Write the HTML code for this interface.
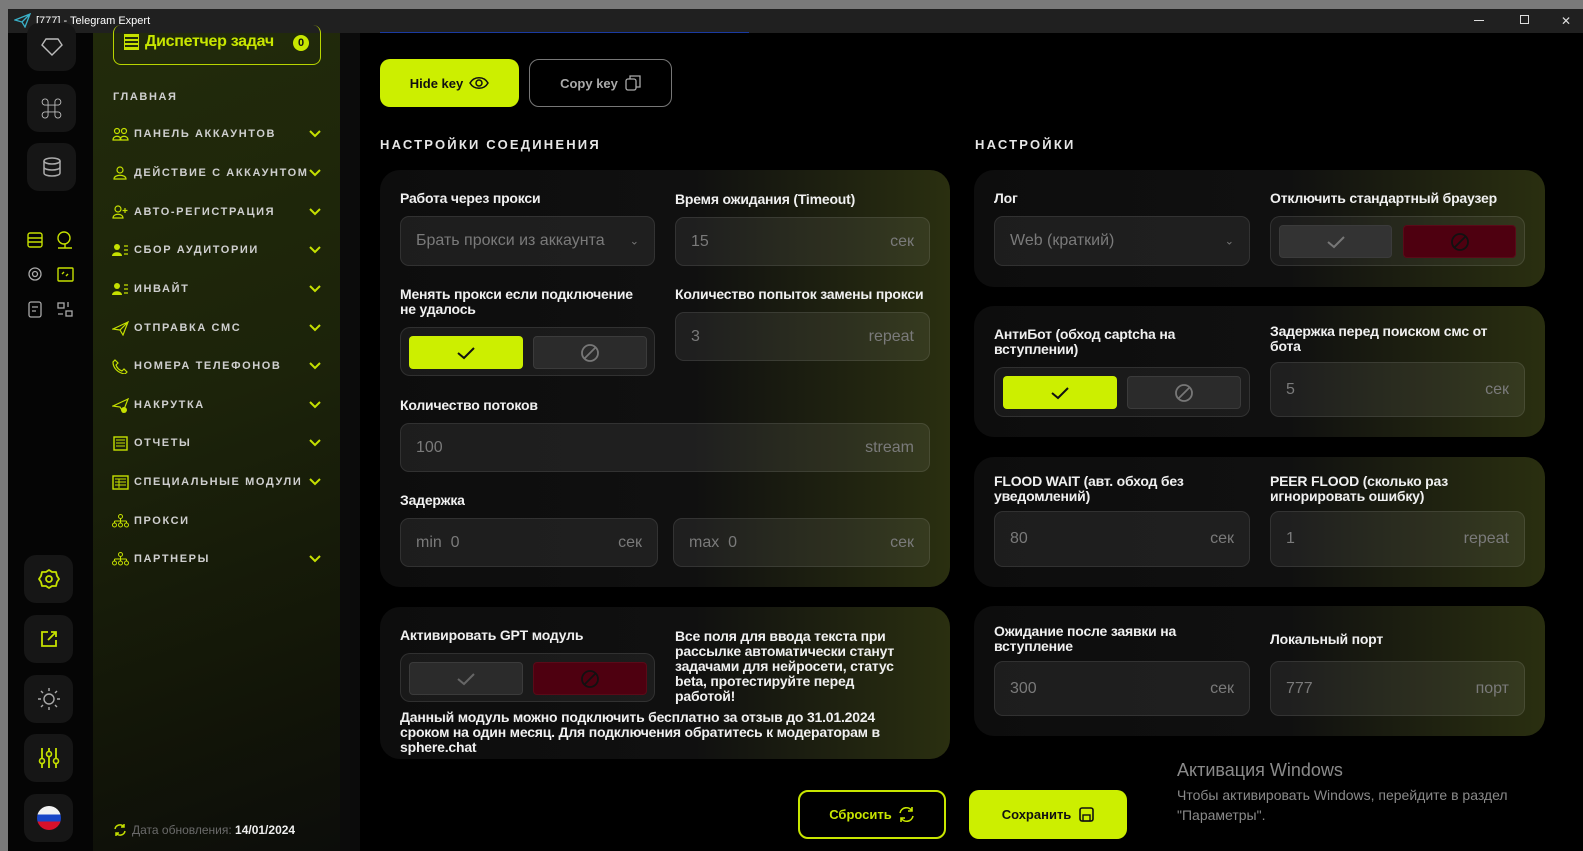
<!DOCTYPE html>
<html><head><meta charset="utf-8"><style>
*{margin:0;padding:0;box-sizing:border-box}
body{width:1583px;height:851px;overflow:hidden;background:#000;font-family:"Liberation Sans","Noto Sans CJK SC",sans-serif;position:relative}
.a{position:absolute}
.card{position:absolute;border-radius:20px;background:linear-gradient(90deg,#0d0d0d 0%,#101010 55%,#2a2f10 100%)}
.lbl{position:absolute;color:#f0f0f0;font-size:14px;font-weight:bold;line-height:15px;letter-spacing:-0.2px}
.inp{position:absolute;border-radius:9px;background:rgba(255,255,255,0.065);border:1px solid rgba(255,255,255,0.09);color:#7a7a7a;font-size:16px}
.inp .v{position:absolute;left:15px;top:50%;transform:translateY(-50%)}
.inp .u{position:absolute;right:15px;top:50%;transform:translateY(-50%)}
.tg{position:absolute;border-radius:10px;background:rgba(255,255,255,0.05);border:1px solid rgba(255,255,255,0.1)}
.b{position:absolute;top:8px;height:33px;width:114px;border-radius:4px;display:flex;align-items:center;justify-content:center}
.yes{background:#ccef00}
.off{background:#2b2b2b;border:1px solid #3b3b3b}
.red{background:#4e0010;border:1px solid #5a0a18}
.hd{position:absolute;color:#e6e6e6;font-size:13px;font-weight:bold;letter-spacing:2.2px}
.mi{position:absolute;left:112px;height:16px;display:flex;align-items:center;color:#cfcfcf;font-size:11px;font-weight:bold;letter-spacing:1.6px}
.mi svg{margin-right:5px}
.rb{position:absolute;left:24px;width:49px;height:48px;border-radius:12px;background:#161616;display:flex;align-items:center;justify-content:center}
</style></head><body>
<div class="a" style="left:0;top:0;width:1583px;height:9px;background:#7a7a7a"></div>
<div class="a" style="left:0;top:0;width:8px;height:851px;background:#7a7a7a"></div>
<div class="a" style="left:8px;top:9px;width:1575px;height:24px;background:#202020"></div>
<svg class="a" style="left:14px;top:13px" width="17" height="15" viewBox="0 0 17 15"><path d="M1 7 L16 1 L11 14 L8 9 Z M8 9 L16 1" fill="none" stroke="#3ab0c8" stroke-width="1.3"/></svg>
<div class="a" style="left:36px;top:15px;color:#fff;font-size:11px">[777] - Telegram Expert</div>
<div class="a" style="left:1474px;top:20px;width:10px;height:1px;background:#ddd"></div>
<div class="a" style="left:1520px;top:15px;width:9px;height:9px;border:1px solid #ddd"></div>
<div class="a" style="left:1561px;top:14px;color:#ddd;font-size:12px">✕</div>

<div class="a" style="left:8px;top:33px;width:85px;height:818px;background:#050505"></div>
<div class="rb" style="left:27px;top:23px;height:48px"><svg width="24" height="20" viewBox="0 0 24 20"><path d="M6 2 H18 L22 8 L12 18 L2 8 Z" fill="none" stroke="#bbb" stroke-width="1.4"/></svg></div>
<div class="rb" style="left:27px;top:84px"><span style="color:#bbb;font-size:22px">⌘</span></div>
<div class="rb" style="left:27px;top:143px"><svg width="20" height="22" viewBox="0 0 20 22"><ellipse cx="10" cy="5" rx="8" ry="3" fill="none" stroke="#aaa" stroke-width="1.5"/><path d="M2 5 V17 C2 21 18 21 18 17 V5 M2 11 C2 15 18 15 18 11" fill="none" stroke="#aaa" stroke-width="1.5"/></svg></div>
<svg class="a" style="left:26px;top:230px" width="52" height="92" viewBox="0 0 52 92">
<g fill="none" stroke="#c5e000" stroke-width="1.4"><rect x="2" y="3" width="14" height="14" rx="2"/><path d="M2 8H16M2 12H16"/><circle cx="38" cy="8" r="6"/><path d="M32 18H46M39 14V18"/>
<rect x="32" y="38" width="15" height="13" rx="1"/><path d="M36 44l2-2M40 46l2-2"/></g>
<g fill="none" stroke="#aaa" stroke-width="1.3"><circle cx="9" cy="44" r="6"/><circle cx="9" cy="44" r="2.5"/><rect x="3" y="72" width="12" height="15" rx="2"/><path d="M6 77H12M6 81H10"/><rect x="32" y="73" width="6" height="5"/><rect x="40" y="81" width="6" height="5"/><path d="M42 72 V77 M32 84H37"/></g></svg>
<div class="rb" style="left:24px;top:555px"><svg width="22" height="22" viewBox="0 0 22 22"><path d="M11 2 L14 4 L18 4 L19 8 L21 11 L19 14 L18 18 L14 18 L11 20 L8 18 L4 18 L3 14 L1 11 L3 8 L4 4 L8 4 Z" fill="none" stroke="#c5e000" stroke-width="1.8" stroke-linejoin="round"/><circle cx="11" cy="11" r="3" fill="none" stroke="#c5e000" stroke-width="1.8"/></svg></div>
<div class="rb" style="left:24px;top:615px"><svg width="20" height="20" viewBox="0 0 20 20"><path d="M9 3H3V17H17V11 M12 3H17V8 M17 3L9 11" fill="none" stroke="#c5e000" stroke-width="1.8"/></svg></div>
<div class="rb" style="left:24px;top:675px"><svg width="24" height="24" viewBox="0 0 24 24"><circle cx="12" cy="12" r="5" fill="none" stroke="#aaa" stroke-width="1.4"/><path d="M12 1V4M12 20V23M1 12H4M20 12H23M4 4L6 6M18 18L20 20M4 20L6 18M18 6L20 4" stroke="#aaa" stroke-width="1.4"/></svg></div>
<div class="rb" style="left:24px;top:734px"><svg width="22" height="24" viewBox="0 0 22 24"><path d="M4 2V22M11 2V22M18 2V22" stroke="#c5e000" stroke-width="1.8"/><circle cx="4" cy="15" r="2.5" fill="#161616" stroke="#c5e000" stroke-width="1.6"/><circle cx="11" cy="8" r="2.5" fill="#161616" stroke="#c5e000" stroke-width="1.6"/><circle cx="18" cy="15" r="2.5" fill="#161616" stroke="#c5e000" stroke-width="1.6"/></svg></div>
<div class="rb" style="left:24px;top:794px"><div style="width:24px;height:24px;border-radius:50%;background:linear-gradient(#f2f2f2 0 35%,#1846c8 35% 65%,#d8102a 65%)"></div></div>

<div class="a" style="left:93px;top:33px;width:247px;height:818px;background:linear-gradient(160deg,#222b0b 0%,#1c230a 45%,#121508 80%,#0c0d0a 100%)"></div>
<div class="a" style="left:340px;top:33px;width:20px;height:818px;background:#0b0b0b"></div>
<div class="a" style="left:113px;top:25px;width:208px;height:40px;border:1.5px solid #b8d400;border-radius:8px;border-top:none"></div>
<div class="a" style="left:124px;top:34px;width:15px;height:16px;border:1.5px solid #c5e000;background:repeating-linear-gradient(#c5e000 0 2px,transparent 2px 4px)"></div>
<div class="a" style="left:145px;top:33px;color:#c8e600;font-size:16px;font-weight:bold;letter-spacing:-0.3px">Диспетчер задач</div>
<div class="a" style="left:293px;top:35px;width:16px;height:16px;border-radius:50%;background:#c8e600;color:#111;font-size:11px;font-weight:bold;text-align:center;line-height:16px">0</div>
<div class="a" style="left:113px;top:91px;color:#cfcfcf;font-size:11px;font-weight:bold;letter-spacing:1.6px">ГЛАВНАЯ</div>

<div class="mi" style="top:126px"><svg width="17" height="14"><g fill="none" stroke="#c5e000" stroke-width="1.2"><circle cx="5" cy="4" r="2.5"/><circle cx="12" cy="4" r="2.5"/><path d="M1 13C1 8 9 8 9 13ZM8 13C8 8 16 8 16 13Z"/></g></svg>ПАНЕЛЬ АККАУНТОВ</div>
<div class="mi" style="top:165px"><svg width="17" height="14"><g fill="none" stroke="#c5e000" stroke-width="1.2"><circle cx="8" cy="4" r="3"/><path d="M2 13C2 8 14 8 14 13Z"/></g></svg>ДЕЙСТВИЕ С АККАУНТОМ</div>
<div class="mi" style="top:204px"><svg width="17" height="14"><g fill="none" stroke="#c5e000" stroke-width="1.2"><circle cx="6" cy="4" r="3"/><path d="M1 13C1 8 11 8 11 13ZM13 3V8M10.5 5.5H15.5"/></g></svg>АВТО-РЕГИСТРАЦИЯ</div>
<div class="mi" style="top:242px"><svg width="17" height="14"><circle cx="5" cy="4" r="3" fill="#c5e000"/><path d="M0 13C0 8 10 8 10 13Z" fill="#c5e000"/><path d="M12 3H16M12 7H16M12 11H16" stroke="#c5e000" stroke-width="1.2"/></svg>СБОР АУДИТОРИИ</div>
<div class="mi" style="top:281px"><svg width="17" height="14"><circle cx="5" cy="4" r="3" fill="#c5e000"/><path d="M0 13C0 8 10 8 10 13Z" fill="#c5e000"/><path d="M12 3H16M12 7H16M12 11H16" stroke="#c5e000" stroke-width="1.2"/></svg>ИНВАЙТ</div>
<div class="mi" style="top:320px"><svg width="17" height="15"><path d="M1 8L16 1L11 14L8 9Z M8 9L16 1" fill="none" stroke="#c5e000" stroke-width="1.2"/></svg>ОТПРАВКА СМС</div>
<div class="mi" style="top:358px"><svg width="17" height="15"><path d="M3 1L6 4L4 6C5 9 7 11 10 12L12 10L15 13L13 15C6 14 1 9 1 3Z" fill="none" stroke="#c5e000" stroke-width="1.2"/></svg>НОМЕРА ТЕЛЕФОНОВ</div>
<div class="mi" style="top:397px"><svg width="17" height="15"><path d="M1 8L16 1L11 14L8 9Z" fill="none" stroke="#c5e000" stroke-width="1.2"/><circle cx="12" cy="12" r="3" fill="#c5e000"/></svg>НАКРУТКА</div>
<div class="mi" style="top:435px"><svg width="17" height="15"><rect x="2" y="1" width="13" height="13" fill="none" stroke="#c5e000" stroke-width="1.4"/><path d="M4 4H13M4 7H13M4 10H13" stroke="#c5e000"/></svg>ОТЧЕТЫ</div>
<div class="mi" style="top:474px"><svg width="17" height="15"><rect x="1" y="1" width="15" height="13" fill="none" stroke="#c5e000" stroke-width="1.4"/><path d="M3 4H14M3 7H14M3 10H14M7 4V13" stroke="#c5e000"/></svg>СПЕЦИАЛЬНЫЕ МОДУЛИ</div>
<div class="mi" style="top:513px"><svg width="17" height="14"><g fill="none" stroke="#c5e000" stroke-width="1"><circle cx="8.5" cy="2.5" r="2"/><path d="M8.5 4.5V7M2.5 7H14.5M2.5 7V9M8.5 7V9M14.5 7V9"/><circle cx="2.5" cy="11" r="2"/><circle cx="8.5" cy="11" r="2"/><circle cx="14.5" cy="11" r="2"/></g></svg>ПРОКСИ</div>
<div class="mi" style="top:551px"><svg width="17" height="14"><g fill="none" stroke="#c5e000" stroke-width="1"><circle cx="8.5" cy="2.5" r="2"/><path d="M8.5 4.5V7M2.5 7H14.5M2.5 7V9M8.5 7V9M14.5 7V9"/><circle cx="2.5" cy="11" r="2"/><circle cx="8.5" cy="11" r="2"/><circle cx="14.5" cy="11" r="2"/></g></svg>ПАРТНЕРЫ</div>
<svg class="a" style="left:308px;top:128px" width="14" height="440"><g fill="none" stroke="#c5e000" stroke-width="2"><path d="M2 3L7 8L12 3"/><path d="M2 42L7 47L12 42"/><path d="M2 81L7 86L12 81"/><path d="M2 119L7 124L12 119"/><path d="M2 158L7 163L12 158"/><path d="M2 197L7 202L12 197"/><path d="M2 235L7 240L12 235"/><path d="M2 274L7 279L12 274"/><path d="M2 312L7 317L12 312"/><path d="M2 351L7 356L12 351"/><path d="M2 428L7 433L12 428"/></g></svg>
<svg class="a" style="left:113px;top:823px" width="14" height="14"><path d="M2 6A5 5 0 0 1 11 4M12 8A5 5 0 0 1 3 10M11 1V4H8M3 13V10H6" fill="none" stroke="#c5e000" stroke-width="1.5"/></svg>
<div class="a" style="left:132px;top:823px;font-size:12px;color:#6a6a6a">Дата обновления: <span style="color:#eee;font-weight:bold">14/01/2024</span></div>

<div class="a" style="left:380px;top:32px;width:369px;height:1px;background:#1a3aa0"></div>
<div class="a" style="left:380px;top:59px;width:139px;height:48px;border-radius:10px;background:#ccef00;color:#111;font-size:13px;font-weight:bold;display:flex;align-items:center;justify-content:center;gap:6px">Hide key <svg width="20" height="14"><path d="M1 7C5 0 15 0 19 7C15 14 5 14 1 7Z" fill="none" stroke="#111" stroke-width="1.5"/><circle cx="10" cy="7" r="3" fill="none" stroke="#111" stroke-width="1.5"/></svg></div>
<div class="a" style="left:529px;top:59px;width:143px;height:48px;border-radius:10px;border:1.5px solid #777;color:#aaa;font-size:13px;font-weight:bold;display:flex;align-items:center;justify-content:center;gap:7px">Copy key <svg width="16" height="16"><rect x="1" y="4" width="10" height="11" rx="2" fill="none" stroke="#aaa" stroke-width="1.3"/><path d="M5 4V1H15V12H11" fill="none" stroke="#aaa" stroke-width="1.3"/></svg></div>

<div class="hd" style="left:380px;top:137px">НАСТРОЙКИ СОЕДИНЕНИЯ</div>
<div class="hd" style="left:975px;top:137px">НАСТРОЙКИ</div>

<div class="card" style="left:380px;top:170px;width:570px;height:417px"></div>
<div class="lbl" style="left:400px;top:191px">Работа через прокси</div>
<div class="inp" style="left:400px;top:216px;width:255px;height:50px"><span class="v">Брать прокси из аккаунта</span><span class="u" style="font-size:11px">⌄</span></div>
<div class="lbl" style="left:675px;top:192px">Время ожидания (Timeout)</div>
<div class="inp" style="left:675px;top:217px;width:255px;height:49px"><span class="v">15</span><span class="u">сек</span></div>
<div class="lbl" style="left:400px;top:287px">Менять прокси если подключение<br>не удалось</div>
<div class="lbl" style="left:675px;top:287px">Количество попыток замены прокси</div>
<div class="tg" style="left:400px;top:327px;width:255px;height:49px"><div class="b yes" style="left:8px;top:8px;width:114px;height:33px"><svg width="20" height="14"><path d="M2 7L8 12L18 2" fill="none" stroke="#111" stroke-width="2"/></svg></div><div class="b off" style="left:132px;top:8px"><svg width="20" height="20"><circle cx="10" cy="10" r="8" fill="none" stroke="#777" stroke-width="1.8"/><path d="M4 16L16 4" stroke="#777" stroke-width="1.8"/></svg></div></div>
<div class="inp" style="left:675px;top:312px;width:255px;height:49px"><span class="v">3</span><span class="u">repeat</span></div>
<div class="lbl" style="left:400px;top:398px">Количество потоков</div>
<div class="inp" style="left:400px;top:423px;width:530px;height:49px"><span class="v">100</span><span class="u">stream</span></div>
<div class="lbl" style="left:400px;top:493px">Задержка</div>
<div class="inp" style="left:400px;top:518px;width:258px;height:49px"><span class="v">min &nbsp;0</span><span class="u">сек</span></div>
<div class="inp" style="left:673px;top:518px;width:257px;height:49px"><span class="v">max &nbsp;0</span><span class="u">сек</span></div>

<div class="card" style="left:380px;top:607px;width:570px;height:152px"></div>
<div class="lbl" style="left:400px;top:628px">Активировать GPT модуль</div>
<div class="tg" style="left:400px;top:653px;width:255px;height:49px"><div class="b off" style="left:8px"><svg width="20" height="14"><path d="M2 7L8 12L18 2" fill="none" stroke="#666" stroke-width="2"/></svg></div><div class="b red" style="left:132px"><svg width="20" height="20"><circle cx="10" cy="10" r="8" fill="none" stroke="#111" stroke-width="1.8"/><path d="M4 16L16 4" stroke="#111" stroke-width="1.8"/></svg></div></div>
<div class="lbl" style="left:675px;top:629px;width:232px">Все поля для ввода текста при рассылке автоматически станут задачами для нейросети, статус beta, протестируйте перед работой!</div>
<div class="lbl" style="left:400px;top:710px;width:505px">Данный модуль можно подключить бесплатно за отзыв до 31.01.2024 сроком на один месяц. Для подключения обратитесь к модераторам в sphere.chat</div>

<div class="card" style="left:974px;top:170px;width:571px;height:117px"></div>
<div class="lbl" style="left:994px;top:191px">Лог</div>
<div class="inp" style="left:994px;top:216px;width:256px;height:50px"><span class="v">Web (краткий)</span><span class="u" style="font-size:11px">⌄</span></div>
<div class="lbl" style="left:1270px;top:191px">Отключить стандартный браузер</div>
<div class="tg" style="left:1270px;top:216px;width:255px;height:50px"><div class="b off" style="left:8px;background:#333;width:113px"><svg width="20" height="14"><path d="M2 7L8 12L18 2" fill="none" stroke="#777" stroke-width="2"/></svg></div><div class="b red" style="left:132px;width:113px"><svg width="20" height="20"><circle cx="10" cy="10" r="8" fill="none" stroke="#111" stroke-width="1.8"/><path d="M4 16L16 4" stroke="#111" stroke-width="1.8"/></svg></div></div>

<div class="card" style="left:974px;top:306px;width:571px;height:131px"></div>
<div class="lbl" style="left:994px;top:327px">АнтиБот (обход captcha на<br>вступлении)</div>
<div class="tg" style="left:994px;top:367px;width:256px;height:50px"><div class="b yes" style="left:8px;width:114px"><svg width="20" height="14"><path d="M2 7L8 12L18 2" fill="none" stroke="#111" stroke-width="2"/></svg></div><div class="b off" style="left:132px"><svg width="20" height="20"><circle cx="10" cy="10" r="8" fill="none" stroke="#777" stroke-width="1.8"/><path d="M4 16L16 4" stroke="#777" stroke-width="1.8"/></svg></div></div>
<div class="lbl" style="left:1270px;top:324px">Задержка перед поиском смс от<br>бота</div>
<div class="inp" style="left:1270px;top:362px;width:255px;height:55px"><span class="v">5</span><span class="u">сек</span></div>

<div class="card" style="left:974px;top:457px;width:571px;height:130px"></div>
<div class="lbl" style="left:994px;top:474px">FLOOD WAIT (авт. обход без<br>уведомлений)</div>
<div class="inp" style="left:994px;top:511px;width:256px;height:56px"><span class="v">80</span><span class="u">сек</span></div>
<div class="lbl" style="left:1270px;top:474px">PEER FLOOD (сколько раз<br>игнорировать ошибку)</div>
<div class="inp" style="left:1270px;top:511px;width:255px;height:56px"><span class="v">1</span><span class="u">repeat</span></div>

<div class="card" style="left:974px;top:606px;width:571px;height:130px"></div>
<div class="lbl" style="left:994px;top:624px">Ожидание после заявки на<br>вступление</div>
<div class="inp" style="left:994px;top:661px;width:256px;height:55px"><span class="v">300</span><span class="u">сек</span></div>
<div class="lbl" style="left:1270px;top:632px">Локальный порт</div>
<div class="inp" style="left:1270px;top:661px;width:255px;height:55px"><span class="v">777</span><span class="u">порт</span></div>

<div class="a" style="left:798px;top:790px;width:148px;height:49px;border:2px solid #c8e600;border-radius:10px;color:#c8e600;font-size:13px;font-weight:bold;display:flex;align-items:center;justify-content:center;gap:6px">Сбросить <svg width="17" height="17"><path d="M2 7A6.5 6.5 0 0 1 14 5M15 10A6.5 6.5 0 0 1 3 12M14 1V5H10M3 16V12H7" fill="none" stroke="#c8e600" stroke-width="1.6"/></svg></div>
<div class="a" style="left:969px;top:790px;width:158px;height:49px;background:#ccef00;border-radius:10px;color:#111;font-size:13px;font-weight:bold;display:flex;align-items:center;justify-content:center;gap:8px">Сохранить <svg width="15" height="15"><rect x="1" y="1" width="13" height="13" rx="2" fill="none" stroke="#111" stroke-width="1.6"/><rect x="4" y="8" width="7" height="6" fill="none" stroke="#111" stroke-width="1.4"/></svg></div>

<div class="a" style="left:1177px;top:760px;color:#8a8a8a;font-size:18px">Активация Windows</div>
<div class="a" style="left:1177px;top:785px;color:#8a8a8a;font-size:14px;line-height:20px">Чтобы активировать Windows, перейдите в раздел<br>"Параметры".</div>
</body></html>
